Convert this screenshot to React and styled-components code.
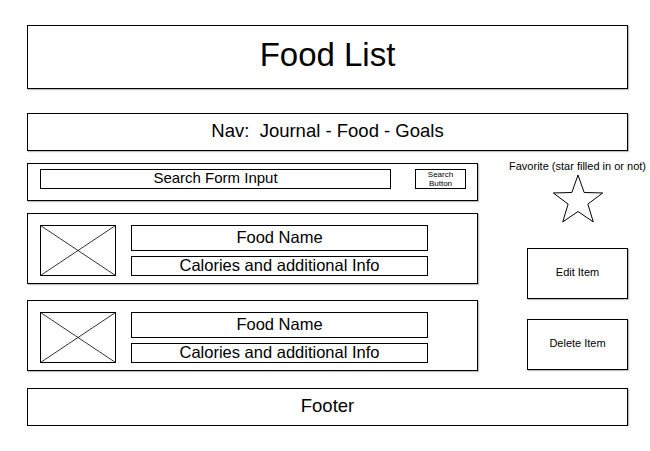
import React from "react";
import styled, { createGlobalStyle } from "styled-components";

const GlobalStyle = createGlobalStyle`
    body {
        margin: 0;
        background: #fff;
        font-family: "Liberation Sans", Arial, sans-serif;
        color: #000;
    }
`;

const Page = styled.div`
    width: 601px;
    padding: 25px 0 0 27px;
`;

const Box = styled.div`
    box-sizing: border-box;
    border: 1px solid #000;
    box-shadow: 1px 1px 1px rgba(0, 0, 0, 0.25);
    background: #fff;
`;

const Banner = styled(Box)`
    height: 64px;
    display: flex;
    align-items: center;
    justify-content: center;
    padding-bottom: 5px;
    font-size: 33px;
`;

const Bar = styled(Box)`
    margin-top: ${(p) => p.$top}px;
    height: 38px;
    display: flex;
    align-items: center;
    justify-content: center;
    padding-bottom: 3px;
    font-size: 18.5px;
`;

const Middle = styled.div`
    margin-top: 12px;
    display: flex;
    gap: 49px;
`;

const LeftColumn = styled.div`
    width: 451px;
    display: flex;
    flex-direction: column;
`;

const SearchBar = styled(Box)`
    height: 38px;
    display: flex;
    align-items: flex-start;
    justify-content: space-between;
    padding: 5px 11px 0 12px;
`;

const SearchInput = styled.div`
    box-sizing: border-box;
    width: 351px;
    height: 20px;
    border: 1px solid #000;
    font-size: 15px;
    line-height: 16px;
    text-align: center;
`;

const SearchButton = styled.div`
    box-sizing: border-box;
    width: 51px;
    height: 20px;
    border: 1px solid #000;
    font-size: 8px;
    line-height: 9px;
    text-align: center;
`;

const Card = styled(Box)`
    margin-top: ${(p) => p.$top}px;
    height: 71px;
    display: flex;
    align-items: flex-start;
    gap: 15px;
    padding: 11px 0 0 12px;
`;

const Thumb = styled.svg`
    display: block;
    flex: none;
`;

const CardText = styled.div`
    width: 297px;
    display: flex;
    flex-direction: column;
    gap: 5px;
`;

const Field = styled.div`
    box-sizing: border-box;
    height: ${(p) => p.$h}px;
    border: 1px solid #000;
    font-size: 16.5px;
    line-height: ${(p) => p.$h - 4}px;
    text-align: center;
`;

const RightColumn = styled.div`
    width: 101px;
    display: flex;
    flex-direction: column;
    align-items: center;
`;

const FavLabel = styled.div`
    margin-top: -3px;
    font-size: 11px;
    line-height: 13px;
    white-space: nowrap;
`;

const Star = styled.svg`
    display: block;
    margin-top: 1px;
`;

const ActionButton = styled(Box)`
    margin-top: ${(p) => p.$top}px;
    width: 101px;
    height: 51px;
    display: flex;
    align-items: center;
    justify-content: center;
    padding-bottom: 4px;
    font-size: 11px;
`;

const Placeholder = () => (
    <Thumb width="76" height="51" viewBox="0 0 76 51">
        <rect x="0.5" y="0.5" width="75" height="50" fill="none" stroke="#000" />
        <line x1="0.5" y1="0.5" x2="75.5" y2="50.5" stroke="#000" strokeWidth="0.8" />
        <line x1="75.5" y1="0.5" x2="0.5" y2="50.5" stroke="#000" strokeWidth="0.8" />
    </Thumb>
);

const FoodCard = ({ top }) => (
    <Card $top={top}>
        <Placeholder />
        <CardText>
            <Field $h={26}>Food Name</Field>
            <Field $h={20}>Calories and additional Info</Field>
        </CardText>
    </Card>
);

const App = () => {
    return (
        <Page>
            <GlobalStyle />
            <Banner>Food List</Banner>
            <Bar $top={24}>Nav:&nbsp; Journal - Food - Goals</Bar>
            <Middle>
                <LeftColumn>
                    <SearchBar>
                        <SearchInput>Search Form Input</SearchInput>
                        <SearchButton>Search<br />Button</SearchButton>
                    </SearchBar>
                    <FoodCard top={12} />
                    <FoodCard top={16} />
                </LeftColumn>
                <RightColumn>
                    <FavLabel>Favorite (star filled in or not)</FavLabel>
                    <Star width="54" height="50" viewBox="0 0 54 50">
                        <polygon
                            points="27,1 33.17,18.5 51.73,18.96 36.88,30.09 42.28,47.93 27,37.5 11.72,47.93 17.12,30.09 2.27,18.96 20.83,18.5"
                            fill="#fff"
                            stroke="#000"
                            strokeWidth="1"
                            strokeLinejoin="round"
                        />
                    </Star>
                    <ActionButton $top={24}>Edit Item</ActionButton>
                    <ActionButton $top={20}>Delete Item</ActionButton>
                </RightColumn>
            </Middle>
            <Bar $top={17}>Footer</Bar>
        </Page>
    );
};

export default App;
